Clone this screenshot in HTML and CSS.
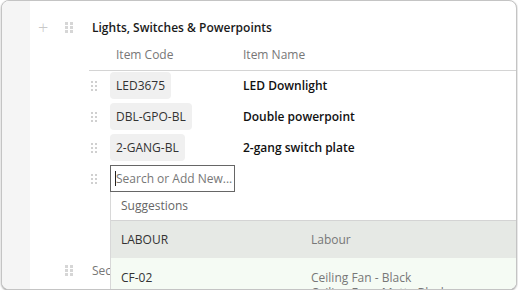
FILE: index.html
```html
<!DOCTYPE html>
<html>
<head>
<meta charset="utf-8">
<link rel="stylesheet" href="styles.css">
</head>
<body>
<div class="frame">
  <div class="strip"></div>
  <div class="main">
    <div class="section-head">
      <span class="add">+</span>
      <span class="grip grip-lg"><i></i><i></i><i></i><i></i><i></i><i></i></span>
      <span class="title">Lights, Switches &amp; Powerpoints</span>
    </div>
    <div class="table">
      <div class="row head">
        <span></span>
        <span class="hcell">Item Code</span>
        <span class="hcell hname">Item Name</span>
      </div>
      <div class="rows">
        <div class="row item">
          <span class="grip"><i></i><i></i><i></i><i></i><i></i><i></i></span>
          <span class="code-cell"><span class="chip">LED3675</span></span>
          <span class="name">LED Downlight</span>
        </div>
        <div class="row item">
          <span class="grip"><i></i><i></i><i></i><i></i><i></i><i></i></span>
          <span class="code-cell"><span class="chip">DBL-GPO-BL</span></span>
          <span class="name">Double powerpoint</span>
        </div>
        <div class="row item">
          <span class="grip"><i></i><i></i><i></i><i></i><i></i><i></i></span>
          <span class="code-cell"><span class="chip">2-GANG-BL</span></span>
          <span class="name">2-gang switch plate</span>
        </div>
        <div class="row item">
          <span class="grip"><i></i><i></i><i></i><i></i><i></i><i></i></span>
          <span class="code-cell search-cell">
            <span class="search"><span class="caret"></span>Search or Add New...</span>
            <div class="dropdown">
              <div class="dd-head">Suggestions</div>
              <div class="dd-row active">
                <span class="dd-code">LABOUR</span>
                <span class="dd-name">Labour</span>
              </div>
              <div class="dd-row hover">
                <span class="dd-code">CF-02</span>
                <span class="dd-name">Ceiling Fan - Black<br>Ceiling Fan - Matte Black</span>
              </div>
            </div>
          </span>
          <span></span>
        </div>
      </div>
    </div>
    <div class="section-head next">
      <span class="add blank"></span>
      <span class="grip grip-lg"><i></i><i></i><i></i><i></i><i></i><i></i></span>
      <span class="placeholder">Section name</span>
    </div>
  </div>
</div>
</body>
</html>
```
FILE: styles.css
```css
html, body {
  margin: 0;
  padding: 0;
  background: #ffffff;
}
body {
  font-family: "Open Sans", "Noto Sans", sans-serif;
  font-size: 12px;
  line-height: 16px;
  color: #222;
}
.frame {
  margin: 0 1px 0 1px;
  width: 516px;
  height: 290px;
  box-sizing: border-box;
  border: 1px solid #c4c4c4;
  border-radius: 8px;
  box-shadow: 0 1px 2px rgba(0,0,0,0.35);
  display: flex;
  overflow: hidden;
  background: #fff;
}
.strip {
  width: 28px;
  flex: none;
  background: #f5f5f5;
}
.main {
  flex: 1;
  padding-top: 16px;
  min-width: 0;
}
.section-head {
  display: flex;
  align-items: center;
  height: 21px;
}
.add {
  margin-left: 8px;
  width: 10px;
  font-size: 18px;
  font-weight: 300;
  color: #c8c8c8;
  line-height: 21px;
  text-align: center;
}
.add.blank { visibility: hidden; }
.grip {
  display: grid;
  grid-template-columns: 2px 2px;
  grid-template-rows: 2px 2px 2px;
  column-gap: 2px;
  row-gap: 2px;
}
.grip i {
  display: block;
  width: 2px;
  height: 2px;
  background: #d0d0d0;
}
.grip-lg {
  margin-left: 17px;
  grid-template-columns: 3px 3px;
  grid-template-rows: 3px 3px 3px;
  column-gap: 2px;
  row-gap: 1px;
}
.grip-lg i {
  width: 3px;
  height: 3px;
  background: #d6d6d6;
}
.title {
  margin-left: 19px;
  font-weight: 600;
  color: #1a1a1a;
}
.table {
  margin-left: 59px;
}
.row {
  display: grid;
  grid-template-columns: 21px 133px 1fr;
  align-items: center;
}
.row.head {
  height: 30px;
  padding-top: 2px;
  border-bottom: 1px solid #d4d4d4;
}
.hcell {
  padding-left: 6px;
  color: #777;
}
.hcell.hname {
  padding-left: 0;
}
.rows {
  padding-top: 1px;
  display: flex;
  flex-direction: column;
  gap: 4px;
}
.row.item {
  height: 27px;
}
.row.item .grip {
  margin-left: 2px;
}
.chip {
  display: inline-flex;
  align-items: center;
  height: 27px;
  padding: 0 6px;
  background: #f0f0f0;
  border-radius: 4px;
  color: #333;
}
.name {
  font-weight: 600;
  color: #111;
}
.search-cell {
  position: relative;
}
.search {
  display: flex;
  align-items: center;
  width: 125px;
  height: 27px;
  box-sizing: border-box;
  border: 1px solid #666;
  padding-left: 4px;
  color: #777;
  white-space: nowrap;
  overflow: hidden;
}
.caret {
  width: 1px;
  height: 15px;
  background: #222;
  flex: none;
}
.dropdown {
  position: absolute;
  left: 0;
  top: 27px;
  width: 420px;
  border-left: 1px solid #d8d8d8;
  background: #fff;
  z-index: 2;
}
.dd-head {
  height: 28px;
  display: flex;
  align-items: center;
  padding-left: 10px;
  color: #666;
  border-bottom: 1px solid #d4d4d4;
}
.dd-row {
  display: grid;
  grid-template-columns: 190px 1fr;
  padding-left: 10px;
}
.dd-row.active {
  height: 37px;
  align-items: center;
  background: #e6e9e5;
  color: #333;
}
.dd-row.hover {
  height: 60px;
  padding-top: 12px;
  box-sizing: border-box;
  background: #f5fbf4;
  line-height: 15px;
  color: #333;
}
.dd-name {
  color: #777;
}
.section-head.next {
  margin-top: 68px;
}
.placeholder {
  margin-left: 19px;
  color: #777;
}
```
